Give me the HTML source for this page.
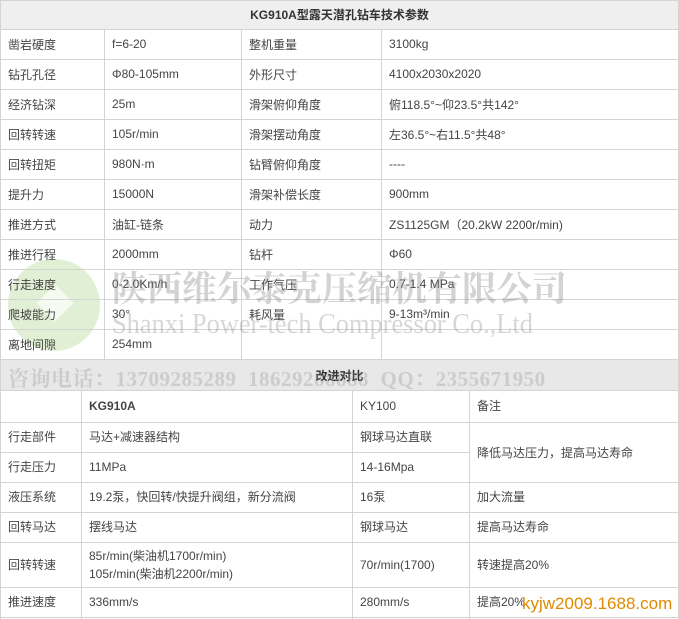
<!DOCTYPE html>
<html><head><meta charset="utf-8"><style>
body{margin:0;width:679px;height:619px;background:#fff;position:relative;overflow:hidden;font-family:"Liberation Sans","Noto Sans CJK SC",sans-serif;font-size:12px;color:#444}
.c{position:absolute;box-sizing:border-box;padding-left:8px;display:flex;align-items:center;white-space:nowrap}
.h{position:absolute;left:0;width:679px;background:#efefef;display:flex;align-items:center;justify-content:center;font-weight:bold;color:#333}
.hl{position:absolute;left:0;width:679px;height:1px;background:#d4d4d4}
.vl{position:absolute;width:1px;background:#d4d4d4}
.wm{position:absolute;font-family:"Liberation Serif","Noto Serif CJK SC",serif;color:rgba(120,120,120,0.35);white-space:nowrap;font-weight:bold}
</style></head><body>
<div class="h" style="top:0;height:29px">KG910A型露天潜孔钻车技术参数</div>
<div class="h" style="top:360px;height:30px;background:#e8e8e8">改进对比</div>
<div style="position:absolute;left:8px;top:259px;width:92px;height:92px;border-radius:50%;background:#d9ecc9;opacity:.8"></div>
<div style="position:absolute;left:42px;top:290px;width:26px;height:26px;background:#fff;transform:rotate(45deg);opacity:.7"></div>
<div id="g"></div>
<div class="wm" style="left:112px;top:262px;font-size:35px;font-family:'Noto Serif CJK SC',serif;letter-spacing:0;color:rgba(130,130,130,0.35)">陕西维尔泰克压缩机有限公司</div>
<div class="wm" style="left:112px;top:308px;font-size:29px;font-weight:normal;color:rgba(140,140,140,0.35);transform:scaleX(0.91);transform-origin:left">Shanxi Power-tech Compressor Co.,Ltd</div>
<div class="wm" style="left:8px;top:363px;font-size:21px;letter-spacing:0.5px;color:rgba(140,140,140,0.3)">咨询电话：13709285289&nbsp;&nbsp;18629288888&nbsp;&nbsp;QQ：2355671950</div>
<script>
var g=document.getElementById('g'),h='';
var t1=[["凿岩硬度","f=6-20","整机重量","3100kg"],["钻孔孔径","Φ80-105mm","外形尺寸","4100x2030x2020"],["经济钻深","25m","滑架俯仰角度","俯118.5°~仰23.5°共142°"],["回转转速","105r/min","滑架摆动角度","左36.5°~右11.5°共48°"],["回转扭矩","980N·m","钻臂俯仰角度","----"],["提升力","15000N","滑架补偿长度","900mm"],["推进方式","油缸-链条","动力","ZS1125GM（20.2kW 2200r/min)"],["推进行程","2000mm","钻杆","Φ60"],["行走速度","0-2.0Km/h","工作气压","0.7-1.4 MPa"],["爬坡能力","30°","耗风量","9-13m³/min"],["离地间隙","254mm","",""]];
var x1=[0,104,241,381,679];
h+='<div class="hl" style="top:29px"></div>';
for(var i=0;i<t1.length;i++){var y=29+30*i;h+='<div class="hl" style="top:'+(y+30)+'px"></div>';
for(var j=0;j<4;j++)h+='<div class="c" style="left:'+x1[j]+'px;top:'+y+'px;width:'+(x1[j+1]-x1[j])+'px;height:30px">'+t1[i][j]+'</div>';}
for(var j=1;j<4;j++)h+='<div class="vl" style="left:'+x1[j]+'px;top:29px;height:331px"></div>';
h+='<div class="vl" style="left:0;top:0;height:619px"></div><div class="vl" style="left:678px;top:0;height:619px"></div><div class="hl" style="top:0"></div>';
var x2=[0,81,352,469,679];var ys=[390,422,452,482,512,542,587,617];
var t2=[["","<b>KG910A</b>","KY100","备注"],["行走部件","马达+减速器结构","钢球马达直联",""],["行走压力","11MPa","14-16Mpa",""],["液压系统","19.2泵，快回转/快提升阀组，新分流阀","16泵","加大流量"],["回转马达","摆线马达","钢球马达","提高马达寿命"],["回转转速","85r/min(柴油机1700r/min)<br>105r/min(柴油机2200r/min)","70r/min(1700)","转速提高20%"],["推进速度","336mm/s","280mm/s","提高20%"]];
h+='<div class="hl" style="top:390px"></div>';
for(var i=0;i<7;i++){var y=ys[i],hh=ys[i+1]-y;h+='<div class="hl" style="top:'+ys[i+1]+'px;'+(i==1?'width:469px':'')+'"></div>';
for(var j=0;j<4;j++){if(i==1&&j==3){h+='<div class="c" style="left:469px;top:422px;width:210px;height:60px">降低马达压力，提高马达寿命</div>';continue;}if(i==2&&j==3)continue;
h+='<div class="c" style="left:'+x2[j]+'px;top:'+y+'px;width:'+(x2[j+1]-x2[j])+'px;height:'+hh+'px;line-height:18px;white-space:normal">'+t2[i][j]+'</div>';}}
for(var j=1;j<4;j++)h+='<div class="vl" style="left:'+x2[j]+'px;top:390px;height:229px"></div>';
g.innerHTML=h;
</script>
<div style="position:absolute;left:522px;top:594px;font-size:17px;color:#e08a00;font-family:'Liberation Sans',sans-serif">kyjw2009.1688.com</div>
</body></html>
